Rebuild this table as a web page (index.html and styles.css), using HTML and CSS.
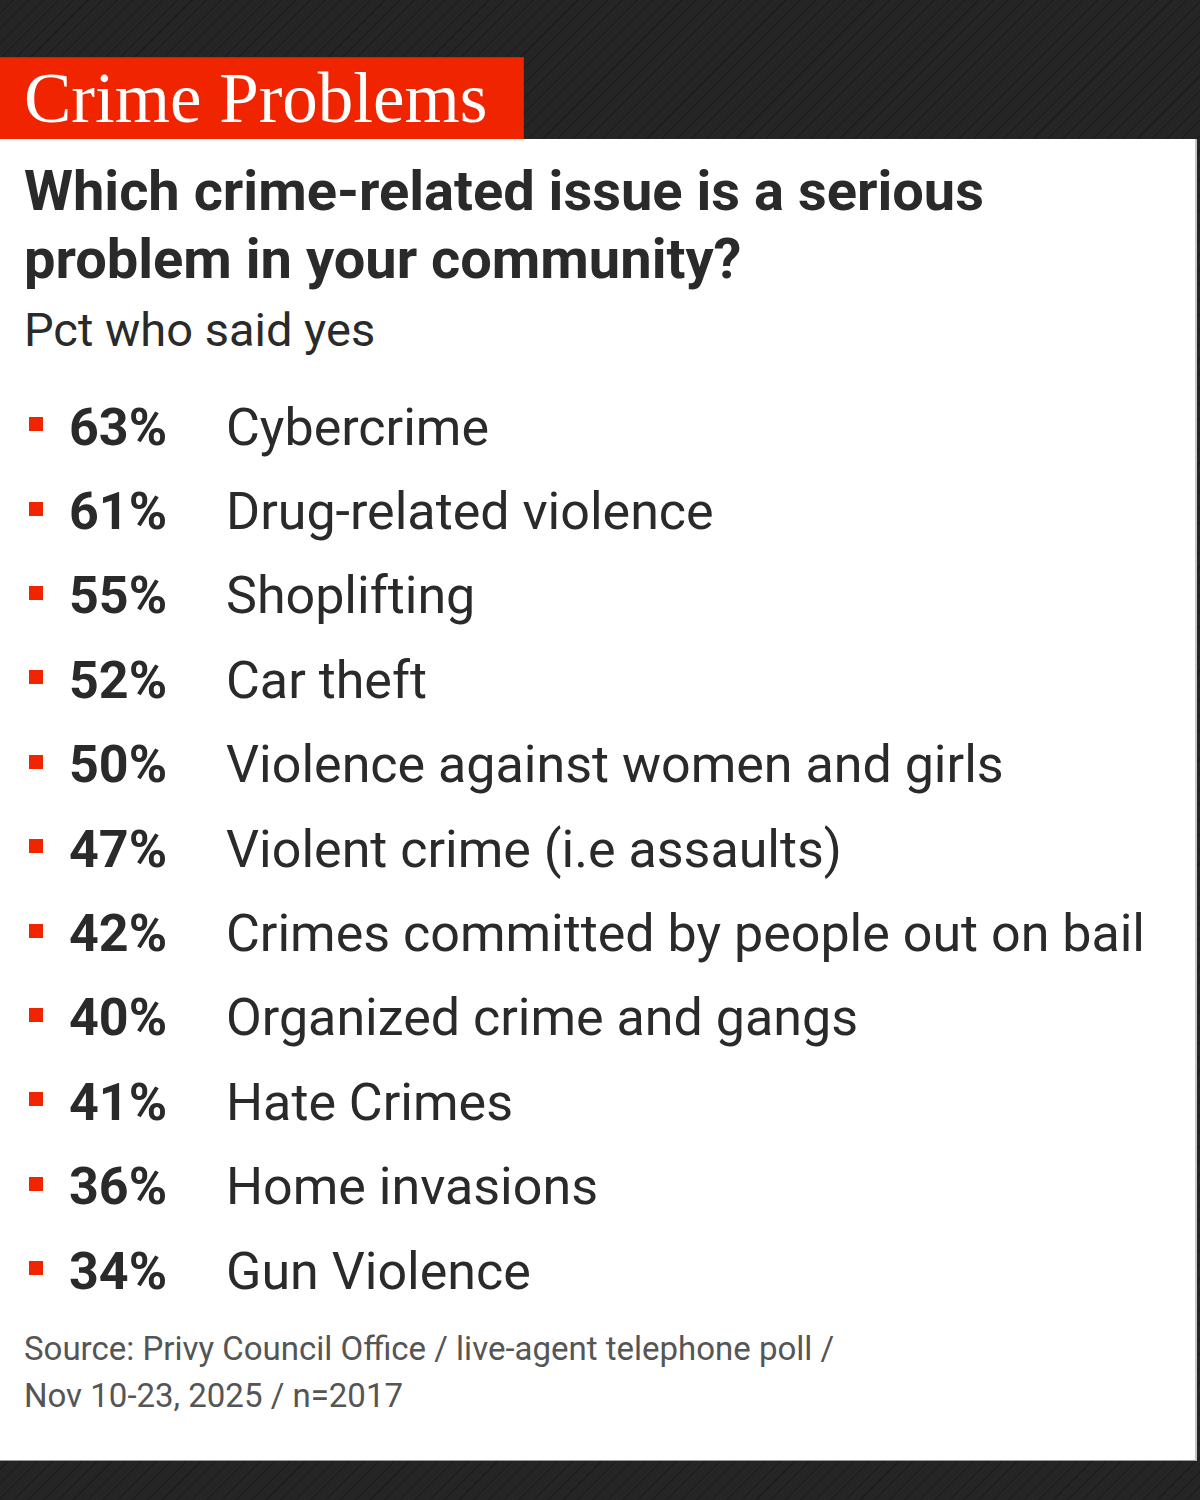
FILE: index.html
```html
<!DOCTYPE html>
<html lang="en">
<head>
<meta charset="utf-8">
<title>Crime Problems</title>
<link rel="stylesheet" href="styles.css">
</head>
<body>
<div class="page">
  <header class="top">
    <div class="tag">Crime Problems</div>
  </header>
  <main class="card">
    <h1 class="title">Which crime-related issue is a serious problem in your community?</h1>
    <p class="sub">Pct who said yes</p>
    <ul class="list">
      <li class="row"><span class="dot"></span><span class="pct">63%</span><span class="label">Cybercrime</span></li>
      <li class="row"><span class="dot"></span><span class="pct">61%</span><span class="label">Drug-related violence</span></li>
      <li class="row"><span class="dot"></span><span class="pct">55%</span><span class="label">Shoplifting</span></li>
      <li class="row"><span class="dot"></span><span class="pct">52%</span><span class="label">Car theft</span></li>
      <li class="row"><span class="dot"></span><span class="pct">50%</span><span class="label">Violence against women and girls</span></li>
      <li class="row"><span class="dot"></span><span class="pct">47%</span><span class="label">Violent crime (i.e assaults)</span></li>
      <li class="row"><span class="dot"></span><span class="pct">42%</span><span class="label">Crimes committed by people out on bail</span></li>
      <li class="row"><span class="dot"></span><span class="pct">40%</span><span class="label">Organized crime and gangs</span></li>
      <li class="row"><span class="dot"></span><span class="pct">41%</span><span class="label">Hate Crimes</span></li>
      <li class="row"><span class="dot"></span><span class="pct">36%</span><span class="label">Home invasions</span></li>
      <li class="row"><span class="dot"></span><span class="pct">34%</span><span class="label">Gun Violence</span></li>
    </ul>
    <p class="source">Source: Privy Council Office / live-agent telephone poll /<br>Nov 10-23, 2025 / n=2017</p>
  </main>
</div>
</body>
</html>
```
FILE: styles.css
```css
html, body {
  margin: 0;
  padding: 0;
}
body {
  width: 1200px;
  height: 1500px;
  background-color: #252525;
  background-image: repeating-linear-gradient(135deg, #252525 0px, #252525 9px, #1e1e1e 9px, #1e1e1e 10.5px);
  font-family: Roboto, "Liberation Sans", sans-serif;
  color: #2a2a2a;
  overflow: hidden;
}
.page {
  display: flex;
  flex-direction: column;
}
.top {
  height: 139px;
  display: flex;
  align-items: flex-end;
}
.tag {
  box-sizing: border-box;
  width: 524px;
  height: 82px;
  background: #f02500;
  border: 1px solid #d42000;
  border-left: none;
  border-bottom: none;
  color: #fff;
  font-family: "Liberation Serif", "DejaVu Serif", serif;
  font-size: 71px;
  line-height: 80px;
  padding-left: 24px;
  white-space: nowrap;
}
.card {
  box-sizing: border-box;
  width: 1197px;
  height: 1322px;
  background: #fff;
  border-right: 2px solid #c4c4c4;
  border-bottom: 1px solid #9a9a9a;
  padding: 18px 0 0 24px;
}
.title {
  margin: 0;
  font-size: 56px;
  line-height: 68px;
  font-weight: 700;
  width: 1050px;
}
.sub {
  margin: 0;
  padding-top: 2px;
  font-size: 47px;
  line-height: 70px;
  font-weight: 400;
}
.list {
  list-style: none;
  margin: 20px 0 0 0;
  padding: 0;
}
.row {
  display: grid;
  grid-template-columns: 45px 159px auto;
  align-items: center;
  height: 84.4px;
  font-size: 52px;
}
.dot {
  width: 14px;
  height: 14px;
  background: #f02500;
  margin-left: 5px;
  margin-bottom: 6px;
}
.pct {
  font-weight: 700;
}
.label {
  font-weight: 400;
  white-space: nowrap;
  margin-left: -2px;
}
.source {
  margin: 12px 0 0 0;
  font-size: 33px;
  line-height: 47px;
  color: #555;
}
```
